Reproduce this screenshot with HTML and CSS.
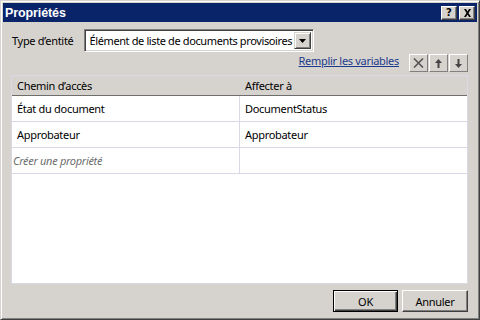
FILE: index.html
```html
<!DOCTYPE html>
<html lang="fr">
<head>
<meta charset="utf-8">
<title>Propriétés</title>
<link rel="stylesheet" href="styles.css">
</head>
<body>
<div class="window">
  <div class="titlebar">
    <span class="title">Propriétés</span>
    <div class="title-btns">
      <span class="tbtn">?</span>
      <span class="tbtn">
        <svg width="9" height="8" viewBox="0 0 9 8"><path d="M1 0h2l1.5 2.5L6 0h2L5.5 4 8 8H6L4.5 5.5 3 8H1l2.5-4z" fill="#000"/></svg>
      </span>
    </div>
  </div>
  <div class="content">
    <div class="type-row">
      <span class="label">Type d’entité</span>
      <div class="combo">
        <span class="combo-text">Élément de liste de documents provisoires</span>
        <span class="combo-btn"><svg width="7" height="4" viewBox="0 0 7 4"><path d="M0 0h7L3.5 4z" fill="#000"/></svg></span>
      </div>
    </div>
    <div class="tools-row">
      <a class="link" href="#">Remplir les variables</a>
      <div class="tools">
        <span class="tool"><svg width="11" height="10" viewBox="0 0 11 10"><path d="M1 0.5l9 9M10 0.5l-9 9" stroke="#555" stroke-width="1.6" fill="none"/></svg></span>
        <span class="tool"><svg width="7" height="9" viewBox="0 0 7 9"><path d="M3.5 0L7 4H4.5v5h-2V4H0z" fill="#444"/></svg></span>
        <span class="tool"><svg width="7" height="9" viewBox="0 0 7 9"><path d="M3.5 9L7 5H4.5V0h-2v5H0z" fill="#444"/></svg></span>
      </div>
    </div>
    <div class="grid">
      <div class="grid-head">
        <div class="col1">Chemin d’accès</div>
        <div class="col2">Affecter à</div>
      </div>
      <div class="grid-row">
        <div class="col1">État du document</div>
        <div class="col2">DocumentStatus</div>
      </div>
      <div class="grid-row">
        <div class="col1">Approbateur</div>
        <div class="col2">Approbateur</div>
      </div>
      <div class="grid-row">
        <div class="col1 placeholder">Créer une propriété</div>
        <div class="col2"></div>
      </div>
    </div>
    <div class="buttons">
      <button class="btn default">OK</button>
      <button class="btn">Annuler</button>
    </div>
  </div>
</div>
</body>
</html>
```
FILE: styles.css
```css
html, body {
  margin: 0;
  padding: 0;
}
body {
  width: 480px;
  height: 320px;
  overflow: hidden;
  font-family: "Noto Sans", "DejaVu Sans", sans-serif;
  font-size: 11px;
  letter-spacing: -0.3px;
  color: #000;
}
.window {
  width: 480px;
  height: 320px;
  box-sizing: border-box;
  background: #d6d3ce;
  border: 1px solid;
  border-color: #d6d3ce #404040 #404040 #d6d3ce;
  box-shadow: inset 1px 1px 0 #fff, inset -1px -1px 0 #808080;
  padding: 2px;
  display: flex;
  flex-direction: column;
}
.titlebar {
  height: 19px;
  background: #0a246a;
  display: flex;
  align-items: center;
  justify-content: space-between;
  padding: 0 2px 0 2px;
}
.title {
  color: #fff;
  font-family: "Liberation Sans", Arial, sans-serif;
  font-weight: bold;
  font-size: 12.5px;
  letter-spacing: -0.1px;
}
.title-btns {
  display: flex;
  gap: 2px;
}
.tbtn {
  width: 16px;
  height: 14px;
  box-sizing: border-box;
  background: #d6d3ce;
  border: 1px solid;
  border-color: #fff #404040 #404040 #fff;
  box-shadow: inset -1px -1px 0 #808080;
  display: flex;
  align-items: center;
  justify-content: center;
  font-family: "DejaVu Sans", sans-serif;
  font-weight: bold;
  font-size: 10px;
  letter-spacing: 0;
  line-height: 1;
}
.content {
  flex: 1;
  display: flex;
  flex-direction: column;
  padding: 7px 9px 0 8px;
}
.type-row {
  display: flex;
  align-items: center;
  gap: 11px;
  padding-left: 1px;
}
.combo {
  width: 230px;
  height: 23px;
  box-sizing: border-box;
  background: #fff;
  border: 1px solid;
  border-color: #808080 #fff #fff #808080;
  box-shadow: inset 1px 1px 0 #404040, inset -1px -1px 0 #d6d3ce;
  display: flex;
  align-items: center;
  padding: 2px 2px 2px 4px;
}
.combo-text {
  flex: 1;
  white-space: nowrap;
  overflow: hidden;
  letter-spacing: -0.38px;
}
.combo-btn {
  width: 17px;
  height: 17px;
  box-sizing: border-box;
  background: #d6d3ce;
  border: 1px solid;
  border-color: #d6d3ce #404040 #404040 #d6d3ce;
  box-shadow: inset 1px 1px 0 #fff, inset -1px -1px 0 #808080;
  display: flex;
  align-items: center;
  justify-content: center;
}
.tools-row {
  display: flex;
  align-items: center;
  justify-content: flex-end;
  gap: 10px;
  height: 20px;
}
.link {
  color: #1c3a8c;
  text-decoration: underline;
  margin-top: -3px;
}
.tools {
  display: flex;
  gap: 1px;
  margin-top: 2px;
}
.tool {
  width: 19px;
  height: 18px;
  box-sizing: border-box;
  border: 1px solid;
  border-color: #fff #808080 #808080 #fff;
  display: flex;
  align-items: center;
  justify-content: center;
}
.grid {
  margin-top: 3px;
  height: 209px;
  box-sizing: border-box;
  background: #fff;
  border: 1px solid #d9d8e6;
  display: flex;
  flex-direction: column;
}
.grid-head {
  display: flex;
  height: 19px;
  background: #d6d3ce;
  border-bottom: 1px solid #6e6e6e;
  align-items: center;
}
.grid-row {
  display: flex;
  height: 25px;
  border-bottom: 1px solid #d9d8e6;
}
.grid-row .col1, .grid-row .col2 {
  display: flex;
  align-items: center;
}
.col1 {
  box-sizing: border-box;
  width: 228px;
  padding-left: 5px;
  border-right: 1px solid #d9d8e6;
}
.grid-head .col1 {
  border-right: none;
}
.col2 {
  flex: 1;
  padding-left: 5px;
}
.placeholder {
  color: #6d6d6d;
  font-style: italic;
  padding-left: 1px;
}
.buttons {
  display: flex;
  justify-content: flex-end;
  gap: 4px;
  margin-top: 6px;
}
.btn {
  height: 22px;
  box-sizing: border-box;
  background: #d6d3ce;
  border: 1px solid;
  border-color: #fff #404040 #404040 #fff;
  box-shadow: inset -1px -1px 0 #808080;
  font-family: "Noto Sans", "DejaVu Sans", sans-serif;
  font-size: 11px;
  letter-spacing: -0.3px;
  color: #000;
  padding: 0;
  width: 66px;
}
.btn.default {
  border: 1px solid #000;
  box-shadow: inset 1px 1px 0 #fff, inset -1px -1px 0 #404040, inset -2px -2px 0 #808080;
  width: 65px;
}
```
